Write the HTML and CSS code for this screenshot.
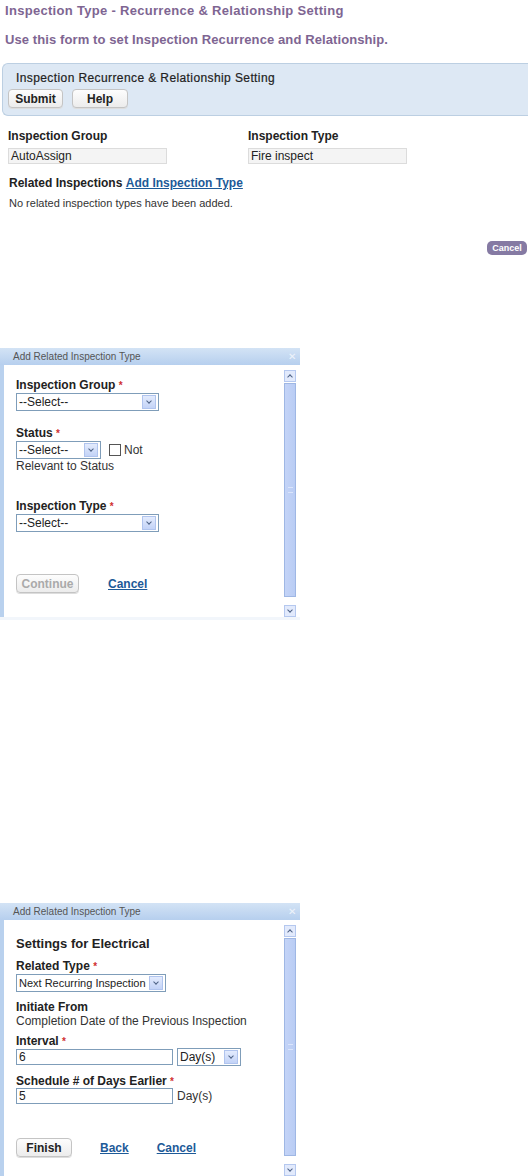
FILE: index.html
```html
<!DOCTYPE html>
<html lang="en">
<head>
  <meta charset="UTF-8">
  <title>Inspection Type - Recurrence &amp; Relationship Setting</title>
  <link rel="stylesheet" href="styles.css">
</head>
<body>

<div class="page-title">Inspection Type - Recurrence &amp; Relationship Setting</div>
<div class="page-intro">Use this form to set Inspection Recurrence and Relationship.</div>

<div class="panel">
  <div class="panel-title">Inspection Recurrence &amp; Relationship Setting</div>
  <div class="panel-buttons">
    <button class="btn btn-submit">Submit</button>
    <button class="btn btn-wide">Help</button>
  </div>
</div>

<div class="fields">
  <div class="field">
    <div class="label">Inspection Group</div>
    <div class="readonly">AutoAssign</div>
  </div>
  <div class="field">
    <div class="label">Inspection Type</div>
    <div class="readonly">Fire inspect</div>
  </div>
</div>

<div class="related">
  <span class="label">Related Inspections</span> <a href="#" class="link">Add Inspection Type</a>
</div>
<div class="note">No related inspection types have been added.</div>

<div class="cancel-row">
  <span class="pill">Cancel</span>
</div>

<!-- first step of the dialog -->
<div class="dialog dialog-one">
  <div class="dialog-bar">
    <span>Add Related Inspection Type</span>
    <span class="close">&#x2715;</span>
  </div>
  <div class="dialog-body">
    <div class="dialog-content">
      <div class="label">Inspection Group <span class="req">*</span></div>
      <div class="select w-143"><span>--Select--</span><i class="arrow"></i></div>

      <div class="label mt-16">Status <span class="req">*</span></div>
      <div class="status-row">
        <div class="select w-85"><span>--Select--</span><i class="arrow"></i></div>
        <span class="check"></span>
        <span class="text">Not</span>
      </div>
      <div class="text">Relevant to Status</div>

      <div class="label mt-27">Inspection Type <span class="req">*</span></div>
      <div class="select w-143"><span>--Select--</span><i class="arrow"></i></div>

      <div class="actions actions-one">
        <button class="btn btn-disabled">Continue</button>
        <a href="#" class="link">Cancel</a>
      </div>
    </div>
    <div class="scrollbar">
      <div class="sb-btn"><i class="sb-up"></i></div>
      <div class="sb-thumb"><span class="grip"></span></div>
      <div class="sb-btn"><i class="sb-down"></i></div>
    </div>
  </div>
  <div class="dialog-foot"></div>
</div>

<!-- second step of the dialog -->
<div class="dialog dialog-two">
  <div class="dialog-bar">
    <span>Add Related Inspection Type</span>
    <span class="close">&#x2715;</span>
  </div>
  <div class="dialog-body">
    <div class="dialog-content">
      <div class="heading">Settings for Electrical</div>

      <div class="label mt-9">Related Type <span class="req">*</span></div>
      <div class="select w-150 small"><span>Next Recurring Inspection</span><i class="arrow"></i></div>

      <div class="label mt-9">Initiate From</div>
      <div class="text">Completion Date of the Previous Inspection</div>

      <div class="label mt-7">Interval <span class="req">*</span></div>
      <div class="input-row">
        <div class="input">6</div>
        <div class="select w-64 flat"><span>Day(s)</span><i class="arrow"></i></div>
      </div>

      <div class="label mt-9">Schedule # of Days Earlier <span class="req">*</span></div>
      <div class="input-row">
        <div class="input">5</div>
        <span class="text">Day(s)</span>
      </div>

      <div class="actions actions-two">
        <button class="btn btn-finish">Finish</button>
        <a href="#" class="link">Back</a>
        <a href="#" class="link">Cancel</a>
      </div>
    </div>
    <div class="scrollbar">
      <div class="sb-btn"><i class="sb-up"></i></div>
      <div class="sb-thumb"><span class="grip"></span></div>
      <div class="sb-btn"><i class="sb-down"></i></div>
    </div>
  </div>
</div>

</body>
</html>
```

FILE: styles.css
```css
body {
  margin: 0;
  font-family: 'Liberation Sans', Arial, sans-serif;
  font-size: 12px;
  color: #222;
  background: #fff;
}

.page-title {
  padding: 3px 5px 0;
  height: 16px;
  font-size: 13px;
  font-weight: bold;
  letter-spacing: 0.3px;
  color: #7e6592;
}

.page-intro {
  padding: 13px 5px 0;
  height: 17px;
  font-size: 13px;
  font-weight: bold;
  letter-spacing: 0.1px;
  color: #7e6592;
}

.panel {
  margin: 14px 0 0 2px;
  height: 51px;
  background: #dde8f4;
  border: 1px solid #bccfe2;
  border-right: none;
  border-radius: 6px 0 0 6px;
  padding: 0 0 0 5px;
}

.panel-title {
  padding: 7px 0 0 8px;
  height: 18px;
  font-size: 12px;
  letter-spacing: 0.4px;
  color: #222;
  -webkit-text-stroke: 0.2px #222;
}

.panel-buttons {
  display: flex;
  gap: 9px;
}

.btn {
  font-family: inherit;
  font-size: 12px;
  font-weight: bold;
  color: #222;
  height: 19px;
  padding: 0 8px;
  border: 1px solid #c4c4c4;
  border-radius: 4px;
  background: linear-gradient(#fdfdfd, #ececec);
  box-shadow: 0 1px 0 #ddd;
}

.btn-submit {
  width: 55px;
  padding: 0;
}

.btn-wide {
  width: 56px;
}

.fields {
  display: flex;
  padding: 14px 0 0 8px;
}

.field {
  width: 240px;
}

.label {
  font-weight: bold;
  font-size: 12px;
  line-height: 13px;
  color: #222;
}

.readonly {
  margin-top: 5px;
  width: 155px;
  height: 14px;
  line-height: 14px;
  padding-left: 2px;
  background: #f4f4f4;
  border: 1px solid #dcdcdc;
  font-size: 12px;
}

.related {
  padding: 12px 0 0 9px;
}

.link {
  color: #1d5a98;
  font-weight: bold;
  text-decoration: underline;
}

.note {
  padding: 7px 0 0 9px;
  font-size: 11px;
  color: #333;
}

.cancel-row {
  display: flex;
  justify-content: flex-end;
  padding: 32px 1px 0 0;
}

.pill {
  display: inline-block;
  width: 40px;
  height: 14px;
  line-height: 14px;
  border-radius: 5px;
  background: #857aa3;
  color: #fff;
  font-size: 9px;
  font-weight: bold;
  text-align: center;
}

/* dialogs */
.dialog {
  width: 300px;
  background: #b9d1ee;
}

.dialog-one {
  margin-top: 93px;
}

.dialog-two {
  margin-top: 283px;
}

.dialog-bar {
  display: flex;
  justify-content: space-between;
  align-items: center;
  height: 17px;
  padding: 0 4px 0 13px;
  font-size: 10px;
  color: #555;
  background: linear-gradient(#d3e3f5, #b6cfee);
}

.close {
  font-size: 10px;
  color: #eef3fa;
}

.dialog-body {
  display: flex;
  margin-left: 4px;
  padding-top: 5px;
  background: #fff;
  height: 252px;
  box-sizing: border-box;
}

.dialog-two .dialog-body {
  height: 256px;
}

.dialog-foot {
  height: 3px;
  background: #f2f6fb;
}

.dialog-content {
  flex: 1;
  padding: 9px 0 0 12px;
}

.dialog-two .dialog-content {
  padding-top: 11px;
}

.req {
  color: #d03030;
  font-size: 10px;
}

.text {
  font-size: 12px;
  color: #333;
}

.select {
  display: flex;
  align-items: center;
  justify-content: space-between;
  box-sizing: border-box;
  height: 18px;
  margin-top: 1px;
  padding: 0 2px;
  border: 1px solid #7f9db9;
  font-size: 12px;
  color: #222;
  background: #fff;
  white-space: nowrap;
  overflow: hidden;
}

.select.small {
  font-size: 11px;
}

.select.flat {
  margin-top: 0;
}

.arrow {
  flex: none;
  width: 14px;
  height: 14px;
  box-sizing: border-box;
  border: 1px solid #b0c4ee;
  background: linear-gradient(#e3ebfd, #c3d3f7);
  position: relative;
}

.arrow::after {
  content: '';
  position: absolute;
  left: 4px;
  top: 3px;
  width: 3px;
  height: 3px;
  border-right: 1.5px solid #4d6185;
  border-bottom: 1.5px solid #4d6185;
  transform: rotate(45deg);
}

.w-143 { width: 143px; }
.w-85 { width: 85px; }
.w-150 { width: 150px; }
.w-64 { width: 64px; }

.mt-7 { margin-top: 7px; }
.mt-9 { margin-top: 9px; }
.mt-16 { margin-top: 16px; }
.mt-27 { margin-top: 27px; }

.status-row {
  display: flex;
  align-items: center;
}

.check {
  width: 10px;
  height: 10px;
  margin: 0 3px 0 8px;
  border: 1px solid #555;
  background: #fff;
}

.actions {
  display: flex;
  align-items: center;
  gap: 29px;
}

.actions-one {
  margin-top: 42px;
}

.actions-two {
  margin-top: 34px;
  gap: 28px;
}

.btn-disabled {
  color: #aaa;
  width: 63px;
  padding: 0;
}

.btn-finish {
  width: 56px;
  padding: 0;
}

.heading {
  font-size: 13px;
  font-weight: bold;
  color: #222;
}

.input-row {
  display: flex;
  align-items: center;
  gap: 4px;
}

.input {
  box-sizing: border-box;
  width: 157px;
  height: 16px;
  padding-left: 2px;
  line-height: 14px;
  border: 1px solid #7f9db9;
  font-size: 12px;
}

/* scrollbar on the right side of each dialog body */
.scrollbar {
  display: flex;
  flex-direction: column;
  width: 12px;
  margin-right: 4px;
}

.sb-btn {
  height: 12px;
  box-sizing: border-box;
  border: 1px solid #b5c8ef;
  background: #e2eafc;
  position: relative;
}

.sb-up::after,
.sb-down::after {
  content: '';
  position: absolute;
  left: 3px;
  width: 3px;
  height: 3px;
  border-left: 1.5px solid #4d6185;
  border-top: 1.5px solid #4d6185;
}

.sb-up::after {
  top: 4px;
  transform: rotate(45deg);
}

.sb-down::after {
  top: 2px;
  transform: rotate(225deg);
}

.sb-thumb {
  flex: 1;
  margin: 1px 0 8px;
  border: 1px solid #9fb7e4;
  background: linear-gradient(90deg, #c4d4f7, #b9ccf4);
  display: flex;
  align-items: center;
  justify-content: center;
}

.grip {
  width: 5px;
  height: 4px;
  border-top: 1px solid #dbe5fb;
  border-bottom: 1px solid #dbe5fb;
}
```
